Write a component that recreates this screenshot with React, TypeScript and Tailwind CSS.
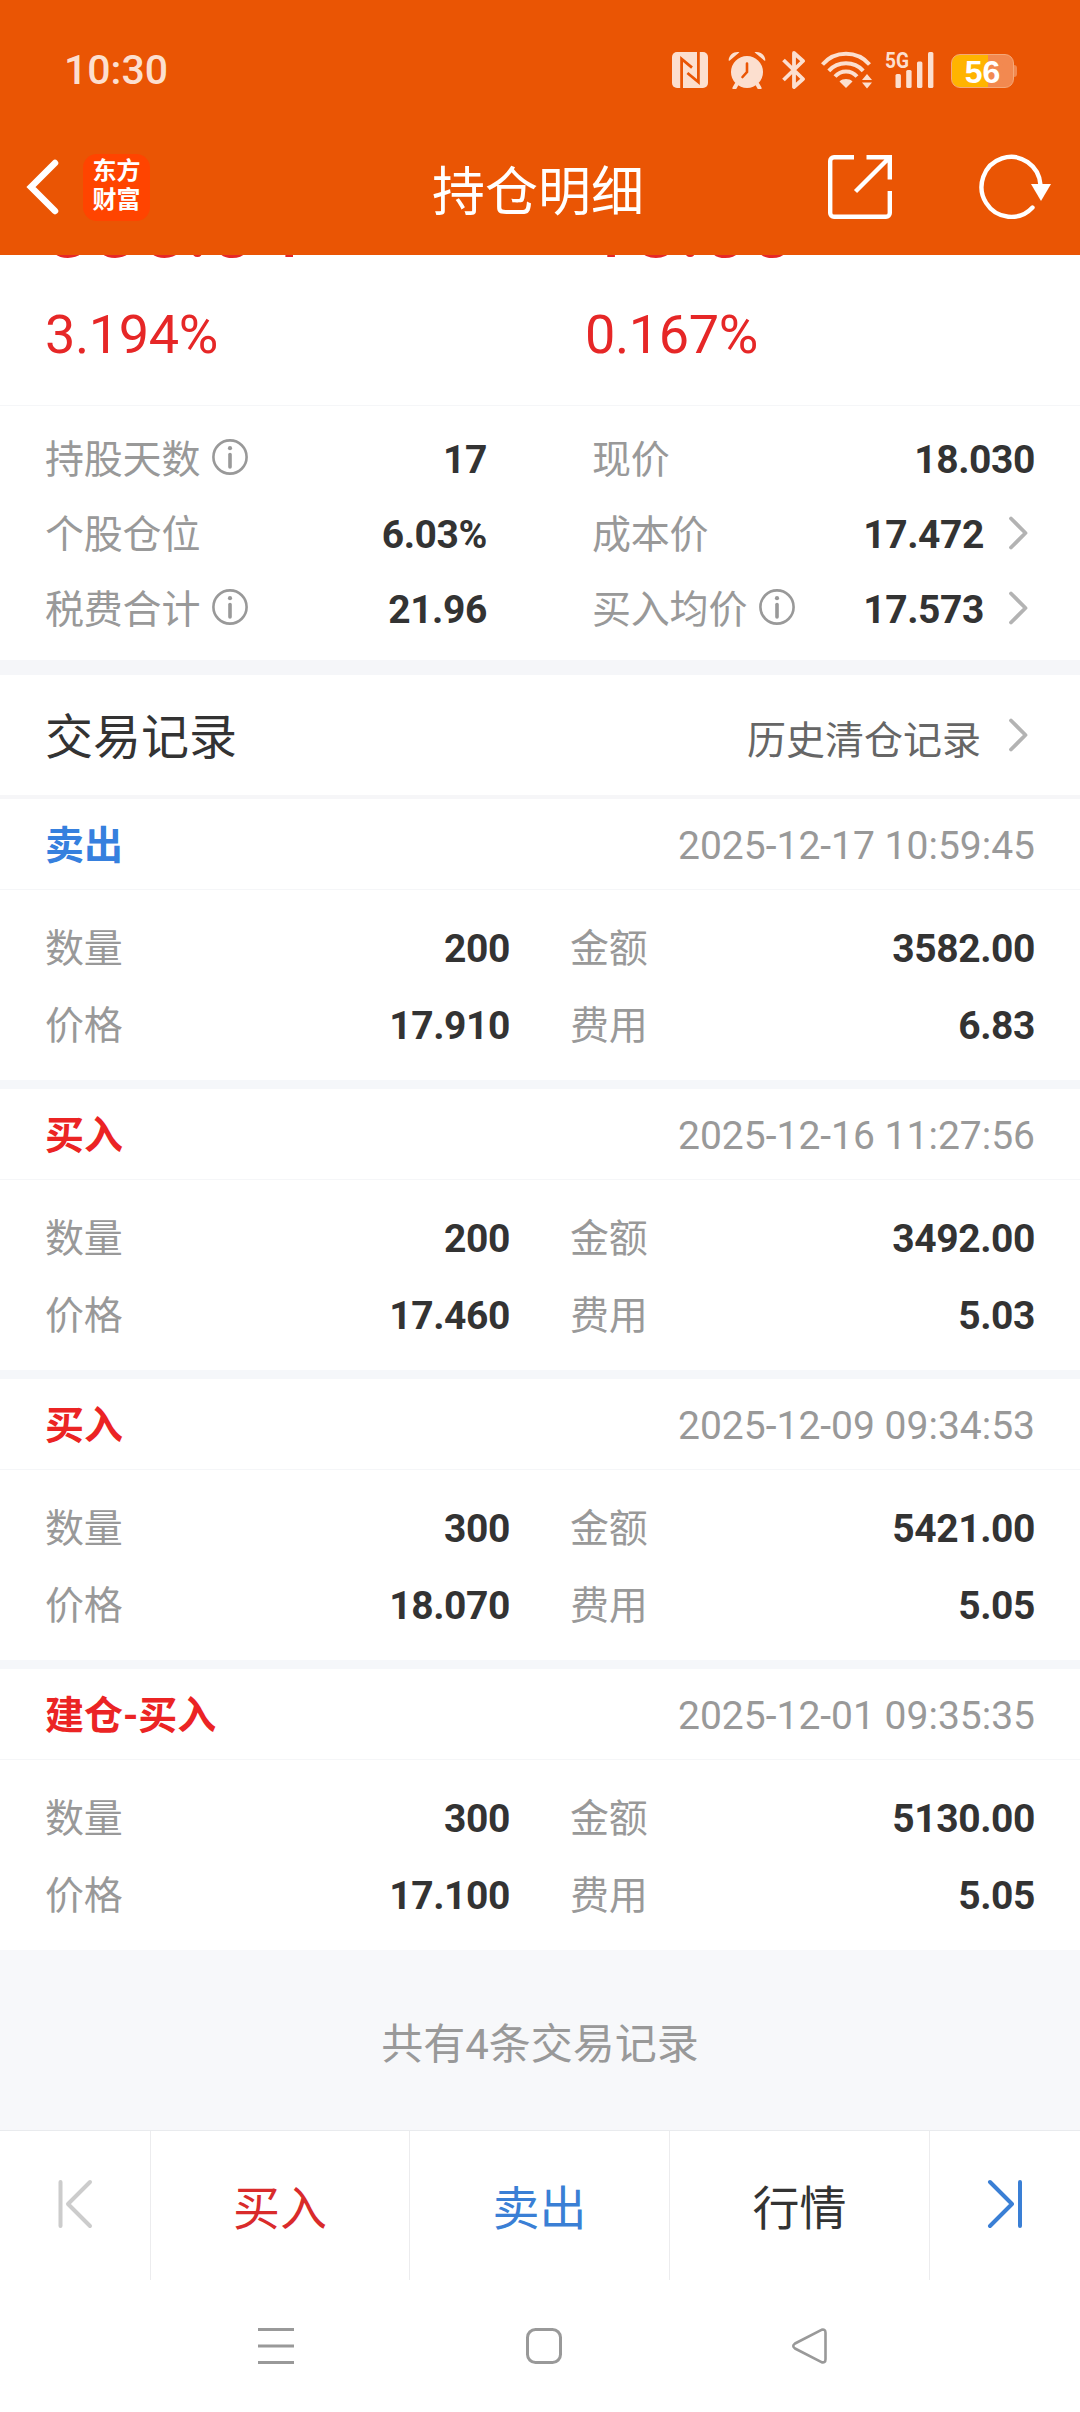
import React from "react";

type Trade = {
  type: string;
  color: string;
  time: string;
  count: string;
  amount: string;
  price: string;
  fee: string;
};

const trades: Trade[] = [
  { type: "卖出", color: "text-[#3680de]", time: "2025-12-17 10:59:45", count: "200", amount: "3582.00", price: "17.910", fee: "6.83" },
  { type: "买入", color: "text-[#eb2424]", time: "2025-12-16 11:27:56", count: "200", amount: "3492.00", price: "17.460", fee: "5.03" },
  { type: "买入", color: "text-[#eb2424]", time: "2025-12-09 09:34:53", count: "300", amount: "5421.00", price: "18.070", fee: "5.05" },
  { type: "建仓-买入", color: "text-[#eb2424]", time: "2025-12-01 09:35:35", count: "300", amount: "5130.00", price: "17.100", fee: "5.05" },
];

const InfoIcon = () => (
  <svg className="ml-3 -mt-2" width="36" height="36" viewBox="0 0 36 36" fill="none" stroke="#999" strokeWidth="2.6">
    <circle cx="18" cy="18" r="16.6" />
    <path d="M18 15.5v12.5" strokeWidth="3.6" strokeLinecap="round" />
    <circle cx="18" cy="9.2" r="2.1" fill="#999" stroke="none" />
  </svg>
);

const Chevron = () => (
  <svg className="ml-[25px] mr-[7px] -mt-1.5" width="19" height="34" viewBox="0 0 19 34" fill="none" stroke="#b3b3b3" strokeWidth="3.8" strokeLinecap="round" strokeLinejoin="round">
    <path d="M2 2.5 16.5 17 2 31.5" />
  </svg>
);

const StatusBar = () => (
  <div className="flex h-[120px] items-center pt-5 pl-16 text-[#fcdfcf]">
    <span className="w-[608px] text-[41px] leading-none font-medium">10:30</span>
    {/* nfc */}
    <svg width="36" height="36" viewBox="0 0 36 36">
      <rect width="36" height="36" rx="5" fill="currentColor" />
      <path d="M9.6 36V7l10.4 8.6M26.4 0v30L15.4 21" fill="none" stroke="#ea5504" strokeWidth="2.8" />
    </svg>
    {/* alarm */}
    <svg className="ml-5" width="38" height="38" viewBox="0 0 38 38">
      <circle cx="19" cy="21" r="16" fill="currentColor" />
      <path d="M8.5 33.5 6.5 37M29.5 33.5l2 3.5" stroke="currentColor" strokeWidth="4" strokeLinecap="round" />
      <path d="M.6 9.5C1 3.5 6 .2 11.5 1.2L1.5 9.8zM37.4 9.5C37 3.5 32 .2 26.5 1.2l10 8.6z" fill="currentColor" />
      <path d="M19 12.5v8.5l-4.5 5" fill="none" stroke="#ea5504" strokeWidth="2.6" strokeLinecap="round" />
    </svg>
    {/* bluetooth */}
    <svg className="ml-4" width="24" height="38" viewBox="0 0 24 38" fill="none" stroke="currentColor" strokeWidth="3.8" strokeLinejoin="round">
      <path d="M1.5 9 21 28l-9 8V2l9 8L1.5 29" />
    </svg>
    {/* wifi */}
    <svg className="ml-[15px]" width="52" height="38" viewBox="0 0 52 38" fill="none" stroke="currentColor" strokeWidth="4">
      <path d="M1.5 13.5C14-.7 36-.7 48.5 13.5M7.8 19.8C17 9.8 33 9.8 42.2 19.8M14 25.5c6-6.6 16-6.6 22 0" />
      <path d="M25 37l-6.5-6.6c3.5-3.2 9.5-3.2 13 0z" fill="currentColor" stroke="none" />
      <path d="M46 23l5 6H41zM46 37.5l5-6H41z" fill="currentColor" stroke="none" />
    </svg>
    {/* signal */}
    <svg className="ml-[13px] overflow-visible" width="50" height="38" viewBox="0 0 50 38" fill="currentColor">
      <text x="-1" y="16.5" fontSize="22" fontWeight="700" textLength="24" lengthAdjust="spacingAndGlyphs">5G</text>
      <rect x="9.5" y="23" width="5.4" height="14" rx="1.5" />
      <rect x="20.2" y="19" width="5.4" height="18" rx="1.5" />
      <rect x="31" y="10.5" width="5.4" height="26.5" rx="1.5" />
      <rect x="42" y="1" width="5.4" height="36" rx="1.5" />
    </svg>
    {/* battery */}
    <div className="ml-[15px] flex items-center pt-0.5">
      <div className="flex h-[34px] w-[63px] items-center justify-center rounded-[9px] border border-[#f5a878] bg-linear-to-r from-[#ffb400] from-59% to-[#f28950] to-59% pt-0.5 font-['Liberation_Sans',sans-serif] text-[32px] leading-none font-bold text-white">
        56
      </div>
      <div className="h-3 w-[3px] rounded-r-sm bg-[#f28950]" />
    </div>
  </div>
);

const Header = () => (
  <div className="flex h-[135px] items-center pb-px pl-[25px]">
    <svg width="34" height="56" viewBox="0 0 34 56" fill="none" stroke="#fff" strokeWidth="6.5" strokeLinecap="round">
      <path d="M30 4 6 28l24 24" />
    </svg>
    <div className="ml-6 flex h-[67px] w-[67px] flex-col items-center justify-center rounded-[14px] bg-[#ff4400] pb-0.5 text-[24px] leading-[29px] font-bold text-white">
      <span>东方</span>
      <span>财富</span>
    </div>
    <h1 className="ml-[282px] w-[217px] pt-3 text-[53px] leading-none text-white">持仓明细</h1>
    <svg className="ml-[179px]" width="64" height="64" viewBox="0 0 64 64" fill="none" stroke="#fff" strokeWidth="4.4">
      <path d="M26 2.2H6A3.8 3.8 0 0 0 2.2 6v52A3.8 3.8 0 0 0 6 61.8h52a3.8 3.8 0 0 0 3.8-3.8V36M38.5 2.2h23.3V24.5M61 3 27.5 36.5" />
    </svg>
    <svg className="ml-[87px]" width="72" height="66" viewBox="0 0 72 66" fill="none" stroke="#fff" strokeWidth="4.4" strokeLinecap="round">
      <path d="M61.5 31A29.5 30 0 1 0 53.5 53.5" />
      <path d="M52 30h20L62 47z" fill="#fff" stroke="none" />
    </svg>
  </div>
);

const StatRow = ({ label, value, info, arrow }: { label: string; value: string; info?: boolean; arrow?: boolean }) => (
  <div className="flex h-[75px] items-center pt-0.5">
    <span className="tracking-[-0.2px] text-[#999]">{label}</span>
    {info && <InfoIcon />}
    <span className="ml-auto font-bold tracking-[-0.4px]">{value}</span>
    {arrow && <Chevron />}
  </div>
);

const Field = ({ label, value }: { label: string; value: string }) => (
  <div className="flex h-[77px] items-center justify-between pt-0.5">
    <span className="tracking-[-0.2px] text-[#999]">{label}</span>
    <span className="font-bold tracking-[-0.4px]">{value}</span>
  </div>
);

const TradeCard = ({ trade }: { trade: Trade }) => (
  <div className="h-[281px] bg-white">
    <div className="flex h-[91px] items-center justify-between border-b border-[#f5f6f8] pt-[5px] pr-[45px] pl-[45px]">
      <span className={`font-bold ${trade.color}`}>{trade.type}</span>
      <span className="text-[#999]">{trade.time}</span>
    </div>
    <div className="grid grid-cols-[465px_465px] gap-x-[60px] pt-5 pl-[45px]">
      <Field label="数量" value={trade.count} />
      <Field label="金额" value={trade.amount} />
      <Field label="价格" value={trade.price} />
      <Field label="费用" value={trade.fee} />
    </div>
  </div>
);

const App = () => {
  return (
    <div className="flex h-[2412px] w-[1080px] flex-col overflow-hidden bg-white font-['Roboto','Noto_Sans_CJK_SC',sans-serif] text-[39px] leading-none text-[#333]">
      <div className="h-[255px] shrink-0 bg-[#ea5504]">
        <StatusBar />
        <Header />
      </div>

      {/* profit, scrolled half under the header */}
      <div className="flex h-[151px] shrink-0 items-end overflow-hidden border-b border-[#f5f6f8] pb-[43px] pl-[45px] text-[#e62727]">
        <div className="flex w-[540px] flex-col gap-[37px]">
          <span className="text-[84px] leading-none">335.04</span>
          <span className="text-[54px] leading-none tracking-[-0.4px]">3.194%</span>
        </div>
        <div className="flex flex-col gap-[37px]">
          <span className="text-[84px] leading-none">18.00</span>
          <span className="text-[54px] leading-none tracking-[-0.4px]">0.167%</span>
        </div>
      </div>

      <div className="flex h-[254px] shrink-0 justify-between pt-4 pr-[45px] pl-[45px]">
        <div className="w-[442px]">
          <StatRow label="持股天数" value="17" info />
          <StatRow label="个股仓位" value="6.03%" />
          <StatRow label="税费合计" value="21.96" info />
        </div>
        <div className="w-[443px]">
          <StatRow label="现价" value="18.030" />
          <StatRow label="成本价" value="17.472" arrow />
          <StatRow label="买入均价" value="17.573" info arrow />
        </div>
      </div>
      <div className="h-[15px] shrink-0 bg-[#f5f6f9]" />

      {/* trade records */}
      <div className="flex h-[124px] shrink-0 items-center justify-between border-b-4 border-[#f6f6f8] pt-1.5 pr-[45px] pl-[45px]">
        <h2 className="text-[48px] leading-none">交易记录</h2>
        <div className="flex items-center text-[#666]">
          <span className="pt-1.5 pr-[3px]">历史清仓记录</span>
          <Chevron />
        </div>
      </div>
      <div className="flex shrink-0 flex-col gap-[9px] bg-[#f5f7fa]">
        {trades.map((trade) => (
          <TradeCard key={trade.time} trade={trade} />
        ))}
      </div>

      <div className="flex h-[180px] shrink-0 items-center justify-center bg-[#f7f8fa] pt-2.5 text-[42px] text-[#999]">
        共有4条交易记录
      </div>

      {/* bottom actions */}
      <div className="grid h-[150px] shrink-0 grid-cols-[151px_259px_260px_260px_150px] border-t border-[#e9ebee] text-[47px] *:flex *:items-center *:justify-center *:border-r *:border-[#ececee]">
        <div>
          <svg className="-mt-1" width="36" height="50" viewBox="0 0 36 50" fill="none" stroke="#ccc" strokeWidth="4" strokeLinecap="round" strokeLinejoin="round">
            <path d="M3.5 3v44M33 3 11 25l22 22" />
          </svg>
        </div>
        <div className="pt-1.5 text-[#d92b2b]">买入</div>
        <div className="pt-1.5 text-[#3a7fd5]">卖出</div>
        <div className="pt-1.5">行情</div>
        <div className="border-r-0!">
          <svg className="-mt-1" width="36" height="50" viewBox="0 0 36 50" fill="none" stroke="#3a7fd5" strokeWidth="4" strokeLinecap="round" strokeLinejoin="round">
            <path d="M33 3v44M3 3l22 22L3 47" />
          </svg>
        </div>
      </div>

      {/* system navigation */}
      <div className="flex h-[132px] shrink-0 items-center pl-[257px]">
        <svg width="38" height="38" viewBox="0 0 38 38" stroke="#999" strokeWidth="3">
          <path d="M1 2.5h36M1 19h36M1 35.5h36" />
        </svg>
        <svg className="ml-[230px]" width="38" height="38" viewBox="0 0 38 38" fill="none" stroke="#999" strokeWidth="3">
          <rect x="2.5" y="2.5" width="33" height="33" rx="8" />
        </svg>
        <svg className="ml-[228px]" width="38" height="38" viewBox="0 0 38 38" fill="none" stroke="#999" strokeWidth="2.6" strokeLinejoin="round">
          <path d="M30.5 2.8 4 16.5q-3.5 2.5 0 5L30.5 35.2q4 1 4-3V5.8q0-4-4-3z" />
        </svg>
      </div>
    </div>
  );
};

export default App;
